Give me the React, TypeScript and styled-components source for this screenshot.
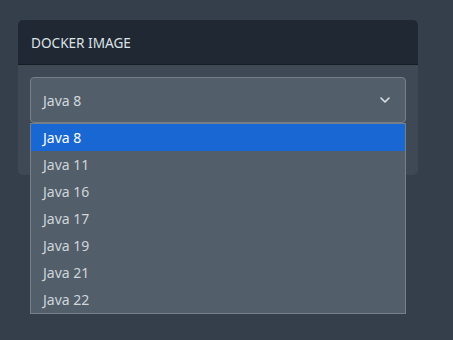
import styled, {createGlobalStyle} from "styled-components";

const GlobalStyle = createGlobalStyle`
    html, body {
        margin: 0;
        padding: 0;
        background: #343f4b;
        font-family: "Noto Sans", "Open Sans", sans-serif;
    }
`;

const StyledPage = styled.div`
    width: 453px;
    height: 340px;
    box-sizing: border-box;
    padding: 20px 0 0 18px;
    background: #343f4b;
`;

const StyledCard = styled.section`
    width: 400px;
    border-radius: 5px;
    background: #3e4955;
`;

const StyledHeader = styled.header`
    height: 45px;
    box-sizing: border-box;
    padding: 0 13px;
    display: flex;
    align-items: center;
    background: #1f2833;
    border-radius: 5px 5px 0 0;
    border-bottom: 1px solid #151c24;
    color: #dde2e7;
    font-size: 13.6px;
`;

const StyledBody = styled.div`
    padding: 12px 12px 52px 12px;
    border-radius: 0 0 5px 5px;
`;

const StyledSelectWrap = styled.div`
    position: relative;
`;

const StyledSelect = styled.div`
    height: 46px;
    box-sizing: border-box;
    display: flex;
    align-items: center;
    justify-content: space-between;
    padding: 0 15px 0 12px;
    background: #525e6a;
    border: 1px solid #767f89;
    border-radius: 4px;
    color: #d3d8dd;
    font-size: 14px;
`;

const StyledList = styled.ul`
    position: absolute;
    top: 46px;
    left: 0;
    right: 0;
    margin: 0;
    padding: 0;
    list-style: none;
    background: #525e6a;
    border: 1px solid #767f89;
    z-index: 2;
`;

const StyledOption = styled.li<{$selected?: boolean}>`
    height: 27px;
    display: flex;
    align-items: center;
    padding: 0 12px;
    font-size: 14px;
    color: ${p => p.$selected ? "#ffffff" : "#d0d5da"};
    background: ${p => p.$selected ? "#1967d2" : "transparent"};
`;

const versions = ["Java 8", "Java 11", "Java 16", "Java 17", "Java 19", "Java 21", "Java 22"];

export default function App(){
    return(
        <StyledPage>
            <GlobalStyle/>
            <StyledCard>
                <StyledHeader>DOCKER IMAGE</StyledHeader>
                <StyledBody>
                    <StyledSelectWrap>
                        <StyledSelect>
                            <span>Java 8</span>
                            <svg width="10" height="6" viewBox="0 0 10 6">
                                <path d="M1 1l4 4 4-4" fill="none" stroke="#dde2e7" strokeWidth="1.6" strokeLinecap="round" strokeLinejoin="round"/>
                            </svg>
                        </StyledSelect>
                        <StyledList>
                            {versions.map((v, i) => (
                                <StyledOption key={v} $selected={i === 0}>{v}</StyledOption>
                            ))}
                        </StyledList>
                    </StyledSelectWrap>
                </StyledBody>
            </StyledCard>
        </StyledPage>
    );
}
